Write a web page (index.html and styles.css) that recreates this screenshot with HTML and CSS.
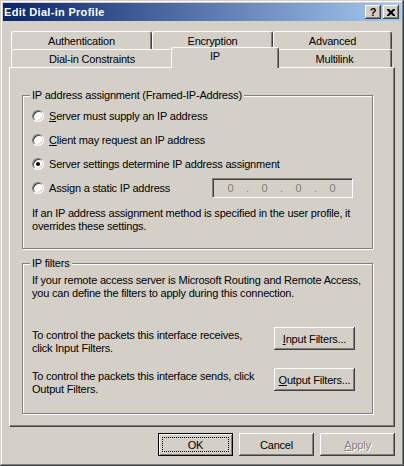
FILE: index.html
```html
<!DOCTYPE html>
<html>
<head>
<meta charset="utf-8">
<link rel="stylesheet" href="styles.css">
</head>
<body>
<div class="window">
  <div class="titlebar">
    <span class="title">Edit Dial-in Profile</span>
    <span class="cap-btn help">?</span>
    <span class="cap-btn close"><svg width="8" height="7" viewBox="0 0 8 7"><path d="M0 0h2l2 2 2-2h2v1L5.5 3.5 8 6v1H6L4 5 2 7H0V6l2.5-2.5L0 1z" fill="#000"/></svg></span>
  </div>
  <div class="content">
    <div class="tabrow">
      <div class="tab w-auth">Authentication</div>
      <div class="tab w-enc">Encryption</div>
      <div class="tab w-adv">Advanced</div>
    </div>
    <div class="tabrow">
      <div class="tab w-dial">Dial-in Constraints</div>
      <div class="tab tab-sel w-ip">IP</div>
      <div class="tab w-multi">Multilink</div>
    </div>
    <div class="panel">
      <div class="group g1">
        <div class="legend">IP address assignment (Framed-IP-Address)</div>
        <div class="opt"><span class="radio"></span><span><u>S</u>erver must supply an IP address</span></div>
        <div class="opt"><span class="radio"></span><span><u>C</u>lient may request an IP address</span></div>
        <div class="opt"><span class="radio on"></span><span>Server settings determine IP address assignment</span></div>
        <div class="opt"><span class="radio"></span><span>Assign a static IP address</span>
          <div class="ipbox"><span class="oct">0</span><span class="dot">.</span><span class="oct">0</span><span class="dot">.</span><span class="oct">0</span><span class="dot">.</span><span class="oct">0</span></div>
        </div>
        <p class="note">If an IP address assignment method is specified in the user profile, it<br>overrides these settings.</p>
      </div>
      <div class="group g2">
        <div class="legend">IP filters</div>
        <p class="intro">If your remote access server is Microsoft Routing and Remote Access,<br>you can define the filters to apply during this connection.</p>
        <div class="frow first">
          <p class="ftext">To control the packets this interface receives,<br>click Input Filters.</p>
          <span class="btn fbtn"><u>I</u>nput Filters...</span>
        </div>
        <div class="frow">
          <p class="ftext">To control the packets this interface sends, click<br>Output Filters.</p>
          <span class="btn fbtn"><u>O</u>utput Filters...</span>
        </div>
      </div>
    </div>
    <div class="buttons">
      <span class="btn dbtn default"><span class="focus">OK</span></span>
      <span class="btn dbtn">Cancel</span>
      <span class="btn dbtn disabled"><u>A</u>pply</span>
    </div>
  </div>
</div>
</body>
</html>
```
FILE: styles.css
```css
html, body {
  margin: 0;
  padding: 0;
  background: #D4D0C8;
}
body {
  font-family: "Liberation Sans", Arial, sans-serif;
  font-size: 11px;
  letter-spacing: -0.2px;
  color: #000;
  white-space: nowrap;
}
.window {
  box-sizing: border-box;
  width: 404px;
  height: 466px;
  padding: 3px;
  background: #D4D0C8;
  box-shadow: inset -1px -1px #404040, inset 1px 1px #D4D0C8, inset -2px -2px #808080, inset 2px 2px #FFFFFF;
}
.titlebar {
  height: 18px;
  display: flex;
  align-items: center;
  padding: 0 2px 0 1px;
  background: linear-gradient(to right, #0A246A, #A6CAF0);
  color: #fff;
  font-weight: bold;
  letter-spacing: 0.3px;
}
.title {
  flex: 1;
}
.cap-btn {
  box-sizing: border-box;
  width: 16px;
  height: 14px;
  display: flex;
  align-items: center;
  justify-content: center;
  background: #D4D0C8;
  color: #000;
  font-size: 11px;
  font-weight: bold;
  letter-spacing: 0;
  box-shadow: inset -1px -1px #404040, inset 1px 1px #FFFFFF, inset -2px -2px #808080;
}
.help {
  margin-right: 2px;
}
.content {
  padding: 10px 0 0 6px;
}
.tabrow {
  display: flex;
  height: 18px;
  margin-left: 2px;
}
.tab {
  box-sizing: border-box;
  height: 18px;
  padding-top: 1px;
  line-height: 16px;
  text-align: center;
  background: #D4D0C8;
  border-top: 1px solid #fff;
  border-left: 1px solid #fff;
  border-right: 1px solid #404040;
  border-radius: 3px 3px 0 0;
  box-shadow: inset -1px 0 #808080;
}
.w-auth { width: 141px; }
.w-enc { width: 121px; }
.w-adv { width: 119px; }
.w-dial { width: 162px; }
.w-ip { width: 108px; }
.w-multi { width: 115px; }
.tab-sel {
  position: relative;
  z-index: 1;
  height: 21px;
  padding-top: 0;
  padding-right: 20px;
  margin: -2px -2px -1px -2px;
}
.panel {
  box-sizing: border-box;
  width: 386px;
  height: 360px;
  border-top: 1px solid #fff;
  border-left: 1px solid #fff;
  border-right: 1px solid #404040;
  border-bottom: 1px solid #404040;
  box-shadow: inset -1px -1px #808080;
  padding: 27px 0 0 12px;
}
.group {
  box-sizing: border-box;
  width: 351px;
  border: 1px solid #808080;
  box-shadow: inset 1px 1px #fff, 1px 1px #fff;
  padding: 0 9px;
}
.g1 { height: 154px; }
.g2 { height: 151px; margin-top: 14px; }
.legend {
  width: fit-content;
  height: 13px;
  line-height: 13px;
  margin: -7px 0 2px -2px;
  padding: 0 2px;
  background: #D4D0C8;
}
.opt {
  display: flex;
  align-items: center;
  height: 24px;
}
.radio {
  box-sizing: border-box;
  width: 12px;
  height: 12px;
  flex: none;
  margin-right: 5px;
  border-radius: 50%;
  background: #fff;
  border: 1px solid;
  border-color: #808080 #fff #fff #808080;
  box-shadow: inset 1px 1px #404040, inset -1px -1px #D4D0C8;
  display: flex;
  align-items: center;
  justify-content: center;
}
.radio.on::after {
  content: "";
  width: 4px;
  height: 4px;
  border-radius: 50%;
  background: #000;
}
.ipbox {
  box-sizing: border-box;
  width: 141px;
  height: 20px;
  margin-left: auto;
  margin-right: 10px;
  padding-left: 4px;
  display: flex;
  align-items: center;
  color: #808080;
  border: 1px solid;
  border-color: #808080 #fff #fff #808080;
  box-shadow: inset 1px 1px #404040, inset -1px -1px #D4D0C8;
}
.oct { width: 27px; text-align: center; }
.dot { width: 7px; text-align: center; }
p {
  margin: 0;
  line-height: 13px;
}
.note { margin-top: 7px; }
.intro { margin-top: 4px; }
.frow {
  display: flex;
  align-items: flex-start;
  height: 23px;
  margin-top: 18px;
}
.frow.first { margin-top: 27px; }
.ftext {
  flex: 1;
  padding-top: 2px;
}
.btn {
  box-sizing: border-box;
  height: 23px;
  display: flex;
  align-items: center;
  justify-content: center;
  background: #D4D0C8;
  box-shadow: inset -1px -1px #404040, inset 1px 1px #FFFFFF, inset -2px -2px #808080, inset 2px 2px #D4D0C8;
}
.fbtn {
  flex: none;
  width: 81px;
  margin-right: 8px;
}
.buttons {
  display: flex;
  justify-content: flex-end;
  gap: 6px;
  width: 386px;
  margin-top: 6px;
}
.dbtn { width: 75px; }
.default {
  border: 1px solid #000;
  box-shadow: inset 1px 1px #fff, inset -1px -1px #808080;
}
.focus {
  box-sizing: border-box;
  width: 65px;
  height: 13px;
  display: flex;
  align-items: center;
  justify-content: center;
  outline: 1px dotted #000;
}
.disabled {
  color: #808080;
  text-shadow: 1px 1px #fff;
}
```
